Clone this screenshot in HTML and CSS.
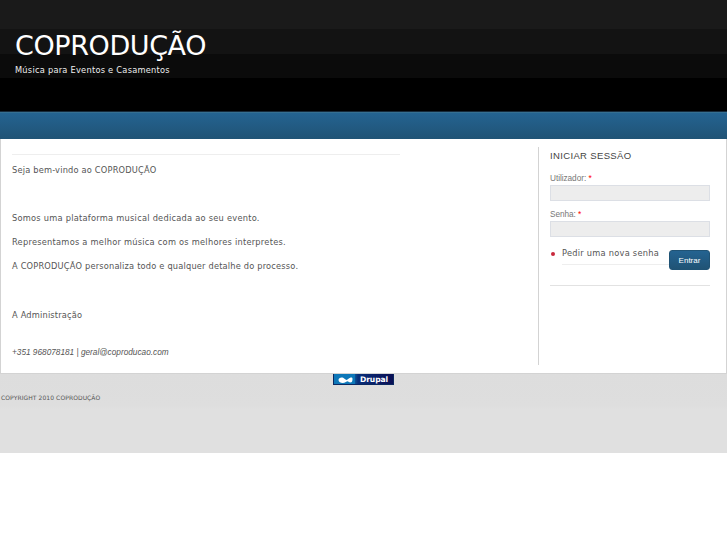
FILE: index.html
```
<!DOCTYPE html>
<html lang="pt">
<head>
    <meta charset="UTF-8">
    <title>COPRODUÇÃO</title>
    <link rel="stylesheet" href="styles.css">
</head>
<body>
    <div class="header">
        <h1 class="site-name"><span>COPRODUÇÃO</span></h1>
        <div class="slogan"><span>Música para Eventos e Casamentos</span></div>
    </div>
    <div class="navbar"></div>

    <div class="main">
        <div class="content">
            <p class="tight"><span>Seja bem-vindo ao COPRODUÇÃO</span></p>
            <p>&nbsp;</p>
            <p><span>Somos uma plataforma musical dedicada ao seu evento.</span></p>
            <p><span>Representamos a melhor música com os melhores interpretes.</span></p>
            <p class="tight"><span>A COPRODUÇÃO personaliza todo e qualquer detalhe do processo.</span></p>
            <p>&nbsp;</p>
            <p class="tight"><span>A Administração</span></p>
            <p class="contact"><em>+351 968078181 | geral@coproducao.com</em></p>
        </div>

        <div class="sidebar">
            <h2>INICIAR SESSÃO</h2>
            <form class="login">
                <label for="name">Utilizador: <span class="required">*</span></label>
                <input type="text" id="name">
                <label for="pass">Senha: <span class="required">*</span></label>
                <input type="password" id="pass">
                <div class="actions">
                    <ul>
                        <li>Pedir uma nova senha</li>
                    </ul>
                    <button type="button" class="submit">Entrar</button>
                </div>
            </form>
        </div>
    </div>

    <div class="footer">
        <div class="badge">
            <svg class="drop" width="21" height="10" viewBox="0 0 21 10">
                <rect width="21" height="10" fill="#0d77b8"/>
                <path d="M4.500 6C4.500 3.500 8.500 2.700 10.500 4.800C12 6.300 13 6.300 14.500 4.800C16 3.300 18.500 2.600 18.500 5C18.500 8 17.500 8.800 15.500 8.300C14 7.500 13 7.400 11.500 8.300C9.500 9.600 4.500 9.200 4.500 6Z" fill="#fff"/>
                <path d="M11.500 8.500L13.500 7.500L15 8.500" fill="none" stroke="#0d77b8" stroke-width="0.700"/>
            </svg>
            <span class="badge-text">Drupal</span>
        </div>
        <div class="copyright"><span>COPYRIGHT 2010 COPRODUÇÃO</span></div>
    </div>
</body>
</html>
```
FILE: styles.css
```
body {
    margin: 0;
    background-color: #ffffff;
    font-family: "DejaVu Sans", Verdana, sans-serif;
    font-size: 8.25px;
    letter-spacing: 0.25px;
    color: #555555;
}
.header {
    box-sizing: border-box;
    height: 112px;
    padding: 28px 15px 0;
    background: linear-gradient(#1a1a1a 0, #1a1a1a 29px, #131313 29px, #131313 54px, #0b0b0b 54px, #0b0b0b 78px, #000000 78px);
    border-bottom: 1px solid #16293a;
    color: #ffffff;
}
.site-name {
    margin: 0;
    font-size: 27px;
    font-weight: normal;
    line-height: 36px;
    letter-spacing: -0.4px;
}
.slogan {
    line-height: 13px;
    color: #eeeeee;
}
.navbar {
    box-sizing: border-box;
    height: 27px;
    border-top: 1px solid #356f91;
    background: linear-gradient(#246391, #205375);
}
.main {
    box-sizing: border-box;
    display: flex;
    justify-content: space-between;
    height: 235px;
    padding: 8px 16px 8px 11px;
    border: 1px solid #d3d3d3;
    border-top: 0;
}
.content {
    width: 388px;
    height: 203px;
    margin-top: 7px;
    border-top: 1px solid #eeeeee;
}
.content p {
    margin: 0 0 8.1px;
    line-height: 16px;
}
.content p:first-child {
    margin-top: 7px;
}
.content .tight {
    letter-spacing: 0.19px;
}
.content .contact {
    margin-top: 22px;
    font-family: "Liberation Sans", Arial, sans-serif;
    font-size: 8.25px;
    letter-spacing: 0;
}
.sidebar {
    box-sizing: border-box;
    width: 172px;
    height: 218px;
    padding-left: 11px;
    border-left: 1px solid #d3d3d3;
}
.sidebar h2 {
    margin: 2px 0 11px;
    font-family: "Liberation Sans", Arial, sans-serif;
    font-size: 9.5px;
    font-weight: normal;
    line-height: 14px;
    letter-spacing: 0.35px;
    color: #444444;
}
.login {
    height: 111px;
    border-bottom: 1px solid #e2e2e2;
}
.login label {
    display: block;
    height: 11px;
    font-family: "Liberation Sans", Arial, sans-serif;
    font-size: 8.25px;
    line-height: 10px;
    letter-spacing: -0.05px;
    color: #777777;
}
.required {
    color: #ff0000;
}
.login input {
    display: block;
    box-sizing: border-box;
    width: 160px;
    height: 16px;
    margin: 0 0 9px;
    padding: 0 2px;
    border: 1px solid #dcdfe5;
    background-color: #ededed;
}
.actions {
    display: flex;
    justify-content: space-between;
    margin-top: 13px;
}
.actions ul {
    flex: 1;
    margin: 0;
    padding: 0 0 0 12px;
    list-style: none;
}
.actions li {
    position: relative;
    height: 14px;
    border-bottom: 1px solid #eeeeee;
    line-height: 7px;
    white-space: nowrap;
}
.actions li::before {
    content: "";
    position: absolute;
    left: -11px;
    top: 2px;
    width: 4px;
    height: 4px;
    border-radius: 50%;
    background-color: #c8283c;
}
.submit {
    width: 41px;
    height: 20px;
    padding: 0;
    border: 1px solid #205375;
    border-radius: 3px;
    background: linear-gradient(#246391, #205375);
    font-family: "Liberation Sans", Arial, sans-serif;
    font-size: 8px;
    color: #ffffff;
}
.footer {
    height: 79px;
    background: linear-gradient(#dddddd 0, #dedede 32px, #e0e0e0 36px);
}
.badge {
    box-sizing: border-box;
    display: flex;
    width: 61px;
    height: 11px;
    margin: 0 auto;
    background: linear-gradient(90deg, #0d5f9f 20px, #092f7a 24px, #0a0f55);
    border: 1px solid #0b2860;
    border-top: 0;
}
.badge-text {
    margin-left: 5px;
    font-family: "DejaVu Sans", sans-serif;
    font-size: 7.6px;
    font-weight: bold;
    line-height: 11px;
    letter-spacing: -0.1px;
    color: #ffffff;
}
.copyright {
    margin: 8px 0 0 1px;
    font-size: 6px;
    line-height: 10px;
    letter-spacing: 0.08px;
}
```
